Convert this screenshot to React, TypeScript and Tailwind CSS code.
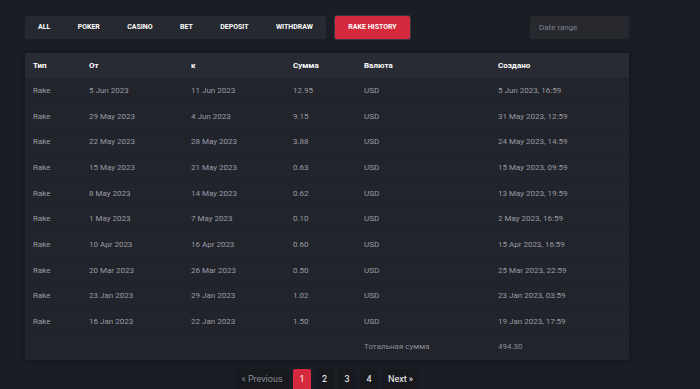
import React from "react";

const rows = [
  ["Rake", "5 Jun 2023", "11 Jun 2023", "12.95", "USD", "5 Jun 2023, 16:59"],
  ["Rake", "29 May 2023", "4 Jun 2023", "9.15", "USD", "31 May 2023, 12:59"],
  ["Rake", "22 May 2023", "28 May 2023", "3.88", "USD", "24 May 2023, 14:59"],
  ["Rake", "15 May 2023", "21 May 2023", "0.63", "USD", "15 May 2023, 09:59"],
  ["Rake", "8 May 2023", "14 May 2023", "0.62", "USD", "13 May 2023, 19:59"],
  ["Rake", "1 May 2023", "7 May 2023", "0.10", "USD", "2 May 2023, 16:59"],
  ["Rake", "10 Apr 2023", "16 Apr 2023", "0.60", "USD", "15 Apr 2023, 16:59"],
  ["Rake", "20 Mar 2023", "26 Mar 2023", "0.50", "USD", "25 Mar 2023, 22:59"],
  ["Rake", "23 Jan 2023", "29 Jan 2023", "1.02", "USD", "23 Jan 2023, 03:59"],
  ["Rake", "16 Jan 2023", "22 Jan 2023", "1.50", "USD", "19 Jan 2023, 17:59"],
];

const tabs = ["ALL", "POKER", "CASINO", "BET", "DEPOSIT", "WITHDRAW"];

const cols = "grid grid-cols-[56px_102px_102px_71px_134px_1fr] pl-[8px]";

export default function App() {
  return (
    <div
      className="w-[700px] h-[389px] overflow-hidden bg-[#1b1d24]"
      style={{ fontFamily: "Roboto, 'Liberation Sans', sans-serif" }}
    >
      <div className="pl-[25px] w-[629px]">
        <div className="flex items-center pt-[15px] h-[40px]">
          <div className="flex items-center justify-between h-[23px] bg-[#262930] rounded-[2px] px-[13px] text-[7px] font-bold text-white w-[301px]">
            {tabs.map((t) => (
              <span key={t}>{t}</span>
            ))}
          </div>
          <div className="ml-[8px] w-[77px] h-[25px] rounded-[3px] bg-[#d52a3d] border border-[#353842] flex items-center justify-center text-[7px] font-bold text-white">
            RAKE HISTORY
          </div>
          <div className="ml-auto w-[99px] h-[23px] rounded-[3px] bg-[#27292f] flex items-center pl-[9px] text-[8px] text-[#7d8088]">
            Date range
          </div>
        </div>

        <div className="mt-[13px] w-[604px] bg-[#21242b] shadow-[0_0_6px_rgba(0,0,0,0.35)]">
          <div className={`${cols} h-[25px] items-center bg-[#282b33] text-[8px] font-bold text-white`}>
            <span>Тип</span>
            <span>От</span>
            <span>к</span>
            <span>Сумма</span>
            <span>Валюта</span>
            <span>Создано</span>
          </div>
          {rows.map((r, i) => (
            <div
              key={i}
              className={`${cols} h-[25.7px] pt-[1px] items-center text-[8px] text-[#9a9ca4] border-b border-[#1d2026]`}
            >
              {r.map((c, j) => (
                <span key={j}>{c}</span>
              ))}
            </div>
          ))}
          <div className={`${cols} h-[25px] items-center text-[8px] text-[#8b8e96]`}>
            <span></span>
            <span></span>
            <span></span>
            <span></span>
            <span>Тотальная сумма</span>
            <span>494.30</span>
          </div>
        </div>

        <div className="w-[604px] flex justify-center mt-[9px] gap-[4px] text-[9px]">
          <div className="h-[22px] bg-[#17191e] rounded-[2px] flex items-center text-[#8a8d95] w-[54px] justify-center">
            « Previous
          </div>
          <div className="h-[22px] w-[18px] bg-[#d52a3d] rounded-[2px] flex items-center justify-center text-white">
            1
          </div>
          <div className="h-[22px] w-[19px] bg-[#17191e] rounded-[2px] flex items-center justify-center text-white">
            2
          </div>
          <div className="h-[22px] w-[18px] bg-[#17191e] rounded-[2px] flex items-center justify-center text-white">
            3
          </div>
          <div className="h-[22px] w-[18px] bg-[#17191e] rounded-[2px] flex items-center justify-center text-white">
            4
          </div>
          <div className="h-[22px] w-[37px] bg-[#17191e] rounded-[2px] flex items-center justify-center text-white">
            Next »
          </div>
        </div>
      </div>
    </div>
  );
}
